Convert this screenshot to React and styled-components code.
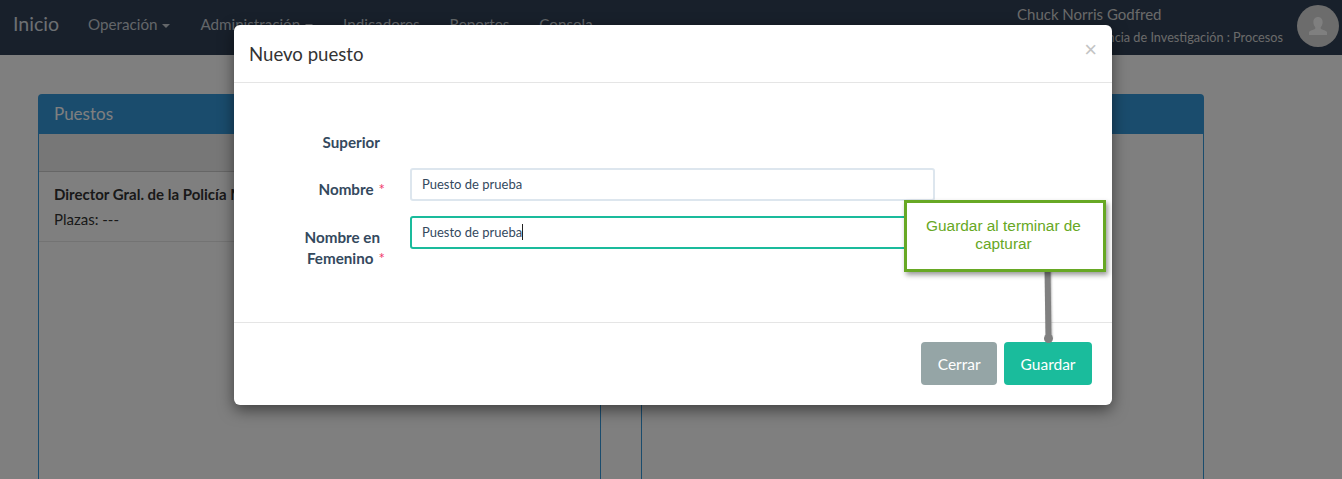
import React from "react";
import styled, { createGlobalStyle } from "styled-components";

const Global = createGlobalStyle`
  html, body { margin: 0; padding: 0; height: 479px; overflow: hidden; background: #fff; }
  body { font-family: Lato, "Open Sans", sans-serif; font-size: 15px; color: #333; }
  * { box-sizing: border-box; }
`;

const Page = styled.div`
  position: relative;
  width: 1342px;
  height: 479px;
  overflow: hidden;
`;
const Navbar = styled.header`
  height: 55px;
  background: #304056;
  display: flex;
  align-items: center;
  color: #d9dee4;
`;
const Brand = styled.div`
  font-size: 19.6px;
  margin-left: 13px;
  width: 75px;
  padding-bottom: 9px;
`;
const NavMenu = styled.nav`
  display: flex;
  gap: 30px;
  font-size: 15.2px;
  color: #c6ccd3;
  padding-bottom: 8px;
`;
const Caret = styled.span`
  display: inline-block;
  margin-left: 1px;
  vertical-align: middle;
  border-top: 4px solid currentColor;
  border-left: 4px solid transparent;
  border-right: 4px solid transparent;
`;
const UserBox = styled.div`
  margin-left: auto;
  display: flex;
  align-items: center;
  gap: 14px;
  padding-right: 3px;
`;
const UserText = styled.div`
  width: 266px;
  display: flex;
  flex-direction: column;
  align-items: flex-start;
  gap: 6px;
  margin-top: -5px;
`;
const UserName = styled.div`
  font-size: 15px;
  color: #d5d5d5;
`;
const UserRole = styled.div`
  align-self: flex-end;
  font-size: 12.7px;
  color: #d5d5d5;
  white-space: nowrap;
`;
const Avatar = styled.div`
  width: 42px;
  height: 42px;
  border-radius: 50%;
  background: #d8d8d8;
  display: flex;
  align-items: center;
  justify-content: center;
  margin-top: -3px;
`;

const Content = styled.main`
  padding: 39px 138px 0 38px;
`;
const Panel = styled.section``;
const PanelHeading = styled.div`
  height: 40px;
  background: #3498db;
  border-radius: 4px 4px 0 0;
  color: #fff;
  font-size: 17px;
  padding: 9px 16px;
`;
const Columns = styled.div`
  display: grid;
  grid-template-columns: 1fr 1fr;
  gap: 40px;
`;
const Column = styled.div`
  height: 400px;
  border: 1px solid #3498db;
  border-top: 0;
  background: #fff;
`;
const ColumnBand = styled.div`
  height: 38px;
  background: #eee;
  border-bottom: 1px solid #ccc;
`;
const PuestoRow = styled.div`
  padding: 13px 15px;
  height: 70px;
  border-bottom: 1px solid #e6e6e6;
`;
const PuestoName = styled.div`
  font-weight: 700;
  font-size: 15px;
  white-space: nowrap;
  margin-bottom: 7px;
`;
const PuestoMeta = styled.div`
  font-size: 15px;
`;

const Backdrop = styled.div`
  position: absolute;
  inset: 0;
  background: rgba(0, 0, 0, 0.5);
`;
const Modal = styled.div`
  position: absolute;
  left: 234px;
  top: 25px;
  width: 878px;
  height: 380px;
  background: #fff;
  border-radius: 6px;
  box-shadow: 0 5px 15px rgba(0, 0, 0, 0.5);
  display: flex;
  flex-direction: column;
`;
const ModalHeader = styled.div`
  height: 58px;
  flex: none;
  border-bottom: 1px solid #e5e5e5;
  display: flex;
  align-items: center;
  justify-content: space-between;
  padding: 0 15px;
`;
const ModalTitle = styled.h4`
  margin: 0;
  font-size: 18.6px;
  font-weight: 400;
  color: #333;
`;
const CloseBtn = styled.span`
  font-family: "Liberation Sans", sans-serif;
  font-size: 22px;
  font-weight: 400;
  color: #c4c4c4;
  margin-top: -8px;
`;
const ModalBody = styled.div`
  flex: 1;
  display: grid;
  grid-template-columns: 146px 525px;
  grid-template-rows: 21px auto auto;
  column-gap: 30px;
  row-gap: 15px;
  align-content: start;
  padding: 49px 0 0 0;
`;
const FieldLabel = styled.label`
  font-weight: 700;
  color: #34495e;
  font-size: 15.2px;
  line-height: 21px;
  text-align: right;
  padding-left: 60px;
  padding-top: ${(p) => p.$top || 0}px;
`;
const Required = styled.span`
  color: #f0386b;
  font-weight: 400;
  margin-left: 5px;
  margin-right: -5px;
`;
const InputBox = styled.div`
  height: 33px;
  border: 2px solid ${(p) => (p.$focus ? "#1abb9c" : "#dde6ee")};
  border-radius: 3px;
  padding: 0 10px 2px;
  display: flex;
  align-items: center;
  font-size: 13px;
  color: #34495e;
`;
const TextCursor = styled.span`
  display: inline-block;
  width: 1px;
  height: 16px;
  background: #222;
`;
const ModalFooter = styled.div`
  height: 83px;
  flex: none;
  border-top: 1px solid #e5e5e5;
  display: flex;
  justify-content: flex-end;
  align-items: flex-start;
  gap: 7px;
  padding: 19px 20px 0 0;
`;
const Button = styled.button`
  height: 43px;
  border: 0;
  border-radius: 4px;
  padding: 0 16.5px;
  color: #fff;
  font-family: inherit;
  font-size: 15.5px;
  background: ${(p) => (p.$primary ? "#1abc9c" : "#95a5a6")};
`;
const Callout = styled.div`
  position: absolute;
  left: 904px;
  top: 200px;
  width: 202px;
  height: 72px;
  border: 3px solid #67a824;
  background: #fff;
  box-shadow: 2px 3px 5px rgba(0, 0, 0, 0.4);
  color: #67a824;
  font-family: "Liberation Sans", sans-serif;
  font-size: 15.4px;
  line-height: 18px;
  text-align: center;
  padding: 14px 13px 14px 10px;
`;
const Connector = styled.div`
  position: absolute;
  left: 1045px;
  top: 268px;
  width: 6px;
  height: 70px;
  background: #808080;
  transform: rotate(-0.8deg);
  box-shadow: 1px 1px 2px rgba(0, 0, 0, 0.25);
`;
const ConnectorDot = styled.div`
  position: absolute;
  left: 1043.5px;
  top: 333.5px;
  width: 9px;
  height: 9px;
  border-radius: 50%;
  background: #808080;
`;

export default function App() {
  return (
    <Page>
      <Global />
      <Navbar>
        <Brand>Inicio</Brand>
        <NavMenu>
          <span>Operación <Caret /></span>
          <span>Administración <Caret /></span>
          <span>Indicadores</span>
          <span>Reportes</span>
          <span>Consola</span>
        </NavMenu>
        <UserBox>
          <UserText>
            <UserName>Chuck Norris Godfred</UserName>
            <UserRole>Dirección de Agencia de Investigación : Procesos</UserRole>
          </UserText>
          <Avatar>
            <svg width="18" height="18" viewBox="0 0 18 18" fill="#fff">
              <path d="M9 0c2.900 0 4.600 2.200 4.600 5.200 0 2-.8 3.800-1.900 4.900v1.500c0 .9 4.600 1.600 6.300 3.500V18H0v-2.900c1.700-1.900 6.300-2.600 6.300-3.500v-1.500C5.200 9 4.400 7.200 4.400 5.200 4.400 2.200 6.100 0 9 0z" />
            </svg>
          </Avatar>
        </UserBox>
      </Navbar>
      <Content>
        <Panel>
          <PanelHeading>Puestos</PanelHeading>
          <Columns>
            <Column>
              <ColumnBand />
              <PuestoRow>
                <PuestoName>Director Gral. de la Policía Ministerial</PuestoName>
                <PuestoMeta>Plazas: ---</PuestoMeta>
              </PuestoRow>
            </Column>
            <Column />
          </Columns>
        </Panel>
      </Content>
      <Backdrop />
      <Modal>
        <ModalHeader>
          <ModalTitle>Nuevo puesto</ModalTitle>
          <CloseBtn>×</CloseBtn>
        </ModalHeader>
        <ModalBody>
          <FieldLabel>Superior</FieldLabel>
          <div />
          <FieldLabel $top={11}>Nombre<Required>*</Required></FieldLabel>
          <InputBox>Puesto de prueba</InputBox>
          <FieldLabel $top={11}>Nombre en Femenino<Required>*</Required></FieldLabel>
          <InputBox $focus>Puesto de prueba<TextCursor /></InputBox>
        </ModalBody>
        <ModalFooter>
          <Button>Cerrar</Button>
          <Button $primary>Guardar</Button>
        </ModalFooter>
      </Modal>
      <Connector />
      <ConnectorDot />
      <Callout>Guardar al terminar de capturar</Callout>
    </Page>
  );
}
